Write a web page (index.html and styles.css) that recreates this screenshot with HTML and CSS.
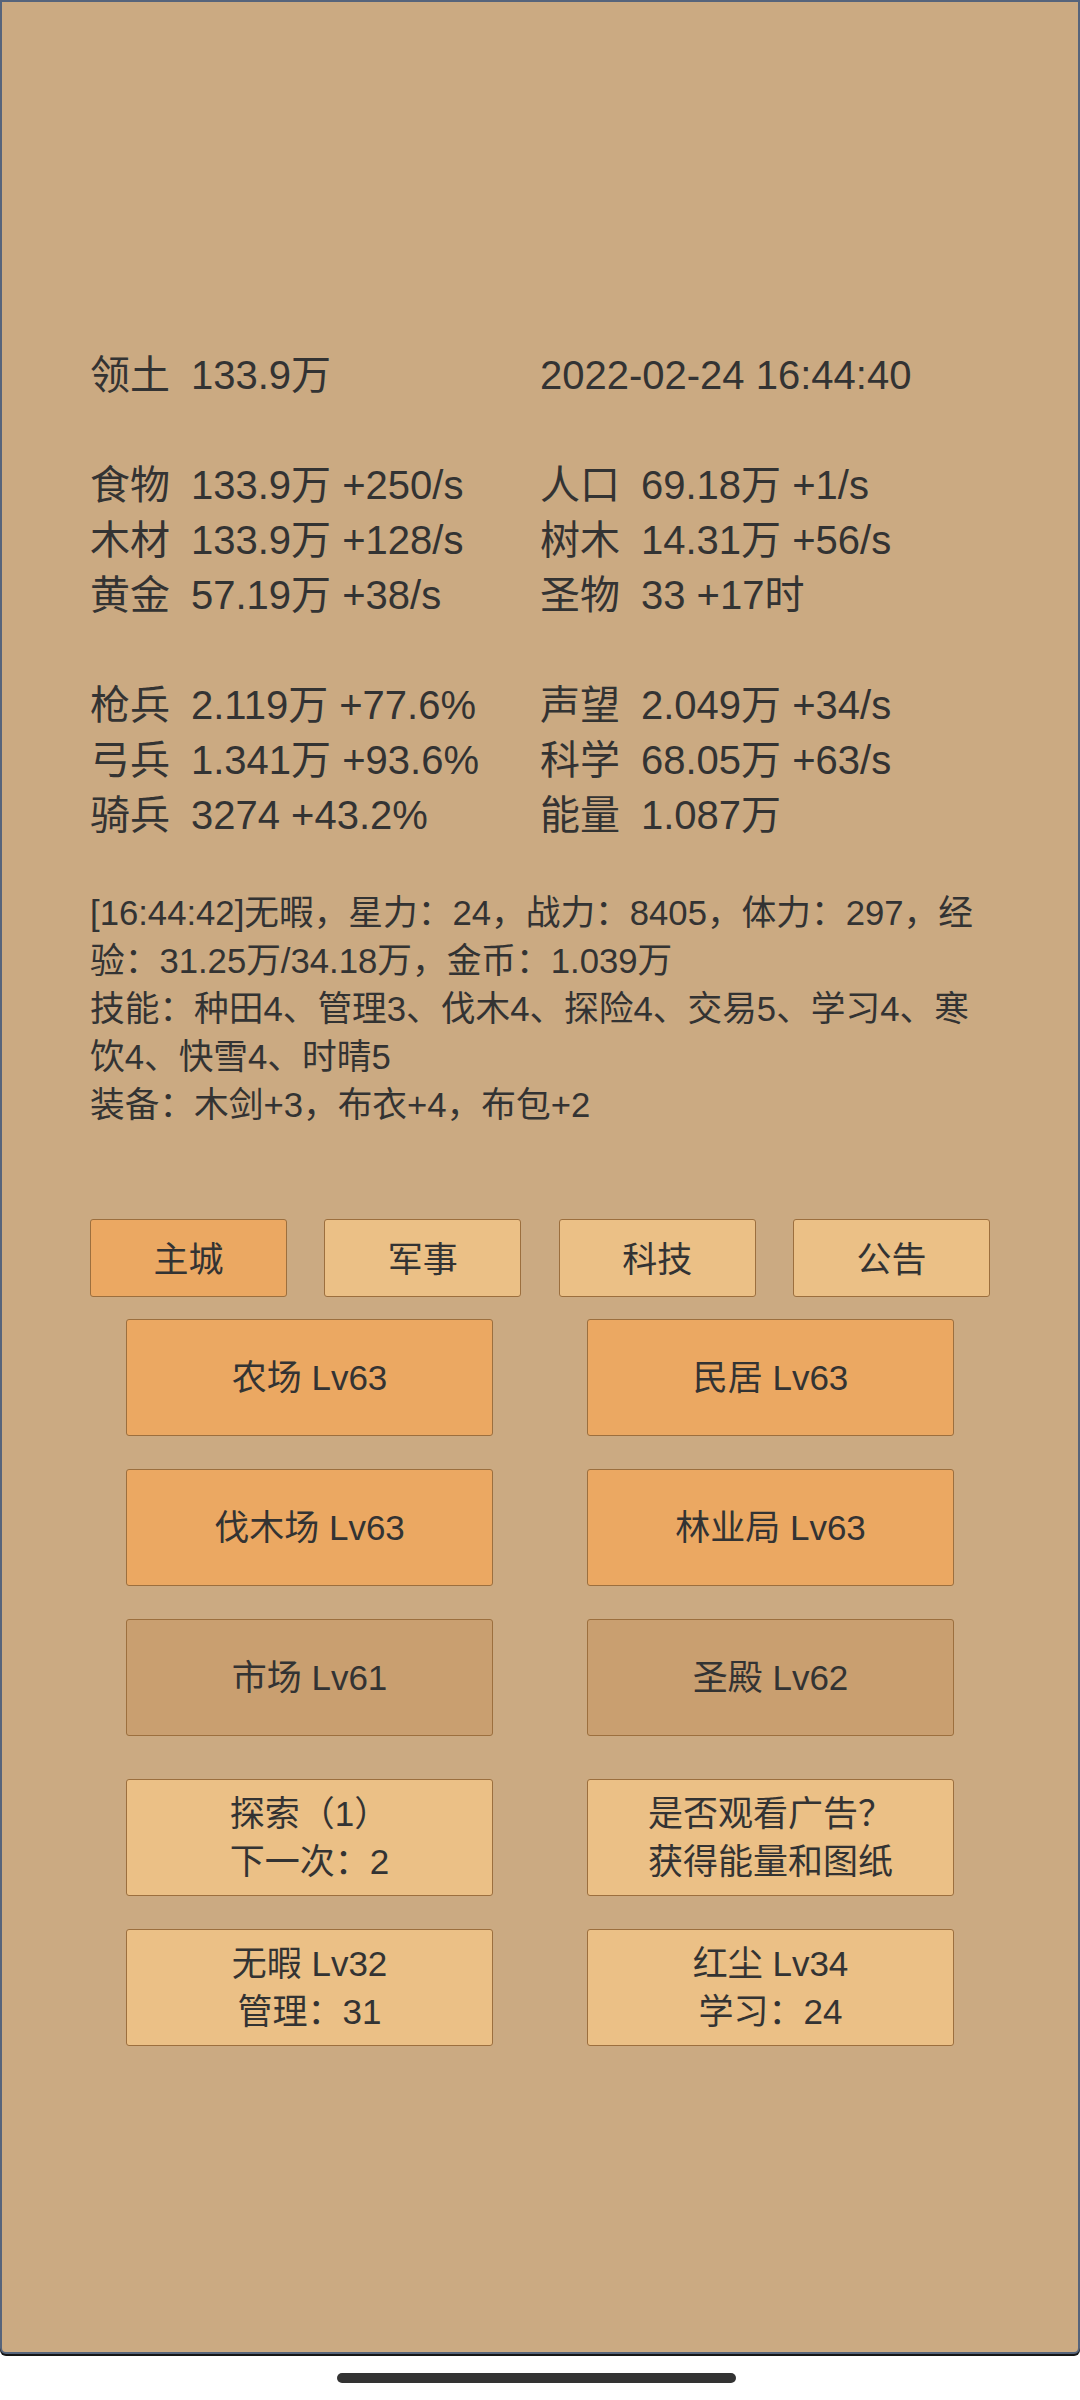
FILE: index.html
```html
<!DOCTYPE html>
<html lang="zh-CN">
<head>
    <meta charset="UTF-8">
    <meta name="viewport" content="width=device-width, initial-scale=1.0">
    <title>主城</title>
    <link rel="stylesheet" href="styles.css">
</head>
<body>
    <div class="game">
        <!-- 资源 -->
        <div class="stats">
            <div class="stat-group">
                <div class="stat"><span class="label">领土</span><span>133.9万</span></div>
                <div class="stat"><span>2022-02-24 16:44:40</span></div>
            </div>
            <div class="stat-group">
                <div class="stat"><span class="label">食物</span><span>133.9万 +250/s</span></div>
                <div class="stat"><span class="label">人口</span><span>69.18万 +1/s</span></div>
                <div class="stat"><span class="label">木材</span><span>133.9万 +128/s</span></div>
                <div class="stat"><span class="label">树木</span><span>14.31万 +56/s</span></div>
                <div class="stat"><span class="label">黄金</span><span>57.19万 +38/s</span></div>
                <div class="stat"><span class="label">圣物</span><span>33 +17时</span></div>
            </div>
            <div class="stat-group">
                <div class="stat"><span class="label">枪兵</span><span>2.119万 +77.6%</span></div>
                <div class="stat"><span class="label">声望</span><span>2.049万 +34/s</span></div>
                <div class="stat"><span class="label">弓兵</span><span>1.341万 +93.6%</span></div>
                <div class="stat"><span class="label">科学</span><span>68.05万 +63/s</span></div>
                <div class="stat"><span class="label">骑兵</span><span>3274 +43.2%</span></div>
                <div class="stat"><span class="label">能量</span><span>1.087万</span></div>
            </div>
        </div>

        <!-- 日志 -->
        <div class="log">
            <p>[16:44:42]无暇，星力：24，战力：8405，体力：297，经验：31.25万/34.18万，金币：1.039万</p>
            <p>技能：种田4、管理3、伐木4、探险4、交易5、学习4、寒饮4、快雪4、时晴5</p>
            <p>装备：木剑+3，布衣+4，布包+2</p>
        </div>

        <div class="tabs">
            <div class="tab active">主城</div>
            <div class="tab">军事</div>
            <div class="tab">科技</div>
            <div class="tab">公告</div>
        </div>

        <div class="buildings">
            <div class="btn">农场 Lv63</div>
            <div class="btn">民居 Lv63</div>
            <div class="btn">伐木场 Lv63</div>
            <div class="btn">林业局 Lv63</div>
            <div class="btn off">市场 Lv61</div>
            <div class="btn off">圣殿 Lv62</div>
        </div>

        <div class="buildings actions">
            <div class="btn light">探索（1）<br>下一次：2</div>
            <div class="btn light">是否观看广告？<br>获得能量和图纸</div>
            <div class="btn light">无暇 Lv32<br>管理：31</div>
            <div class="btn light">红尘 Lv34<br>学习：24</div>
        </div>
    </div>
    <div class="home-bar"></div>
</body>
</html>
```

FILE: styles.css
```css
body {
    margin: 0;
    background-color: #fff;
    font-family: "Liberation Sans", Arial, "Noto Sans CJK SC", sans-serif;
    color: #333;
    width: 1080px;
    height: 2400px;
    overflow: hidden;
}
.game {
    box-sizing: border-box;
    height: 2354px;
    background-color: #cbaa82;
    border: 2px solid #56647b;
    border-radius: 0 0 6px 6px;
    box-shadow: 0 2px 0 #151515;
    padding: 346px 88px 0 88px;
}
.stats {
    font-size: 40px;
    line-height: 55px;
}
.stat-group {
    display: grid;
    grid-template-columns: 450px 450px;
    margin-bottom: 55px;
}
.stat-group:last-child {
    margin-bottom: 0;
}
.stat {
    display: flex;
    white-space: nowrap;
}
.label {
    width: 101px;
    flex-shrink: 0;
}
.log {
    margin-top: 46px;
    width: 900px;
    font-size: 34.7px;
    line-height: 48px;
}
.log p {
    margin: 0;
}
.tabs {
    display: flex;
    justify-content: space-between;
    width: 900px;
    margin-top: 90px;
}
.tab {
    box-sizing: border-box;
    width: 197px;
    height: 78px;
    padding-bottom: 3px;
    background-color: #ebc086;
    border: 1px solid #9c6f3e;
    border-radius: 3px;
    font-size: 35px;
    display: flex;
    align-items: center;
    justify-content: center;
}
.tab.active {
    background-color: #eba862;
}
.buildings {
    display: grid;
    grid-template-columns: 367px 367px;
    column-gap: 94px;
    row-gap: 33px;
    justify-content: center;
    margin: 22px -88px 0 -88px;
}
.actions {
    margin-top: 43px;
}
.btn {
    box-sizing: border-box;
    height: 117px;
    background-color: #eba862;
    border: 1px solid #9c6f3e;
    border-radius: 3px;
    font-size: 35px;
    line-height: 48px;
    display: flex;
    align-items: center;
    justify-content: center;
    text-align: center;
}
.btn.off {
    background-color: #c99f70;
}
.btn.light {
    background-color: #ebc086;
}
.home-bar {
    width: 399px;
    height: 10px;
    margin: 19px 0 0 337px;
    background-color: #333;
    border-radius: 5px;
}
```
